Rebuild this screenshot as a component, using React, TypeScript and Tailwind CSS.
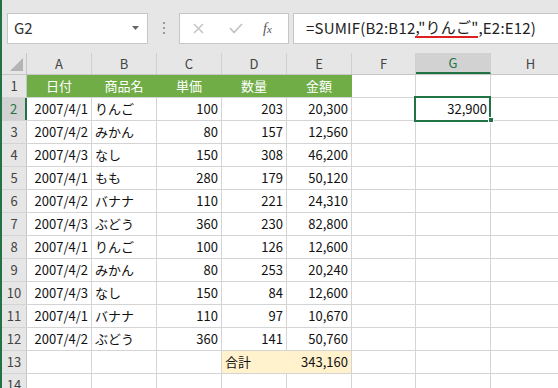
import React from 'react';

const cols = [
  { key: 'A', w: 'w-[65px]' },
  { key: 'B', w: 'w-[65px]' },
  { key: 'C', w: 'w-[65px]' },
  { key: 'D', w: 'w-[65px]' },
  { key: 'E', w: 'w-[65px]' },
  { key: 'F', w: 'w-[64px]' },
  { key: 'G', w: 'w-[75px]' },
  { key: 'H', w: 'w-[80px]' },
];

type Row = [string, string, string, string, string];

const rows: Row[] = [
  ['2007/4/1', 'りんご', '100', '203', '20,300'],
  ['2007/4/2', 'みかん', '80', '157', '12,560'],
  ['2007/4/3', 'なし', '150', '308', '46,200'],
  ['2007/4/1', 'もも', '280', '179', '50,120'],
  ['2007/4/2', 'バナナ', '110', '221', '24,310'],
  ['2007/4/3', 'ぶどう', '360', '230', '82,800'],
  ['2007/4/1', 'りんご', '100', '126', '12,600'],
  ['2007/4/2', 'みかん', '80', '253', '20,240'],
  ['2007/4/3', 'なし', '150', '84', '12,600'],
  ['2007/4/1', 'バナナ', '110', '97', '10,670'],
  ['2007/4/2', 'ぶどう', '360', '141', '50,760'],
];

const heads = ['日付', '商品名', '単価', '数量', '金額'];

const font = { fontFamily: '"Noto Sans CJK JP", "Noto Sans", sans-serif' };

function RowHead({ n, active }: { n: number; active?: boolean }) {
  return (
    <div
      className={`w-[25px] shrink-0 h-full flex items-center justify-center text-[13px] border-r border-[#c6c6c6] ${
        active ? 'bg-[#d2d2d2] text-[#217346] border-r-2 border-r-[#217346]' : 'bg-[#e6e6e6] text-[#444]'
      }`}
    >
      {n}
    </div>
  );
}

function Cell({ i, children, right, cls = '' }: { i: number; children?: React.ReactNode; right?: boolean; cls?: string }) {
  return (
    <div
      className={`${cols[i].w} shrink-0 h-full border-r border-[#d4d4d4] flex items-center px-[3px] text-[13px] text-[#111] whitespace-nowrap ${
        right ? 'justify-end' : 'justify-start'
      } ${cls}`}
    >
      {children}
    </div>
  );
}

export default function App() {
  return (
    <div className="w-[558px] h-[388px] overflow-hidden bg-[#e6e6e6] border-l-2 border-[#217346]" style={font}>
      {/* formula bar */}
      <div className="flex items-center h-[53px] pt-[3px] pl-[5px]">
        <div className="w-[141px] h-[31px] bg-white border border-[#c6c6c6] flex items-center justify-between px-[6px] pr-[8px]">
          <span className="text-[15px] text-[#333]">G2</span>
          <svg width="7" height="5" viewBox="0 0 7 5">
            <path d="M0 0 L7 0 L3.5 4 Z" fill="#666" />
          </svg>
        </div>
        <div className="w-[31px] flex flex-col items-center gap-[3px]">
          <span className="w-[2px] h-[2px] bg-[#9a9a9a]" />
          <span className="w-[2px] h-[2px] bg-[#9a9a9a]" />
          <span className="w-[2px] h-[2px] bg-[#9a9a9a]" />
        </div>
        <div className="w-[110px] h-[31px] bg-white border border-[#c6c6c6] flex items-center">
          <svg className="ml-[13px]" width="11" height="11" viewBox="0 0 11 11">
            <path d="M1 1 L10 10 M10 1 L1 10" stroke="#c4c4c4" strokeWidth="1.5" />
          </svg>
          <svg className="ml-[25px]" width="14" height="11" viewBox="0 0 14 11">
            <path d="M1 5 L5 9.5 L13 1" stroke="#c4c4c4" strokeWidth="1.8" fill="none" />
          </svg>
          <span
            className="ml-[20px] text-[14px] italic text-[#555]"
            style={{ fontFamily: '"Liberation Serif", serif' }}
          >
            f<span className="text-[11px]">x</span>
          </span>
        </div>
        <div className="ml-[4px] flex-1 h-[31px] bg-white border border-[#c6c6c6] border-r-0 flex items-center pl-[12px] text-[15px] tracking-[0.2px] text-[#222] whitespace-nowrap">
          <span>=SUMIF(B2:B12</span>
          <span className="border-b-2 border-[#e02020] leading-[18px]">,"りんご"</span>
          <span>,E2:E12)</span>
        </div>
      </div>

      {/* sheet */}
      <div className="flex flex-col">
        <div className="flex h-[22px] border-b border-[#c6c6c6]">
          <div className="w-[25px] shrink-0 h-full border-r border-[#c6c6c6] relative">
            <svg className="absolute right-[3px] bottom-[3px]" width="13" height="13" viewBox="0 0 13 13">
              <path d="M13 0 L13 13 L0 13 Z" fill="#b4b4b4" />
            </svg>
          </div>
          {cols.map((c) => (
            <div
              key={c.key}
              className={`${c.w} shrink-0 h-full flex items-center justify-center text-[13px] border-r border-[#d0d0d0] ${
                c.key === 'G' ? 'bg-[#d2d2d2] text-[#217346] border-b-2 border-b-[#217346]' : 'text-[#444]'
              }`}
            >
              {c.key}
            </div>
          ))}
        </div>

        {/* row 1 */}
        <div className="flex h-[23px] border-b border-[#d4d4d4] bg-white">
          <RowHead n={1} />
          {heads.map((h, i) => (
            <Cell key={h} i={i} cls="bg-[#70ad47] text-white justify-center border-r-[#70ad47]">
              <span className="w-full text-center text-white">{h}</span>
            </Cell>
          ))}
          <Cell i={5} />
          <Cell i={6} />
          <Cell i={7} />
        </div>

        {rows.map((r, idx) => (
          <div key={idx} className="flex h-[23px] border-b border-[#d4d4d4] bg-white">
            <RowHead n={idx + 2} active={idx === 0} />
            <Cell i={0} right>{r[0]}</Cell>
            <Cell i={1}>{r[1]}</Cell>
            <Cell i={2} right>{r[2]}</Cell>
            <Cell i={3} right>{r[3]}</Cell>
            <Cell i={4} right>{r[4]}</Cell>
            <Cell i={5} />
            {idx === 0 ? (
              <div className="w-[75px] shrink-0 h-full relative">
                <div className="absolute left-[-2px] top-[-2px] w-[77px] h-[26px] border-2 border-[#217346] flex items-center justify-end pr-[2px] text-[13px] text-[#111]">
                  32,900
                </div>
                <div className="absolute right-[-3px] bottom-[-3px] w-[6px] h-[6px] bg-[#217346] border border-white" />
              </div>
            ) : (
              <Cell i={6} />
            )}
            <Cell i={7} />
          </div>
        ))}

        {/* row 13 */}
        <div className="flex h-[23px] border-b border-[#d4d4d4] bg-white">
          <RowHead n={13} />
          <Cell i={0} />
          <Cell i={1} />
          <Cell i={2} />
          <Cell i={3} cls="bg-[#fff2cc] border-r-[#fff2cc]">合計</Cell>
          <Cell i={4} right cls="bg-[#fff2cc]">343,160</Cell>
          <Cell i={5} />
          <Cell i={6} />
          <Cell i={7} />
        </div>

        {/* row 14 */}
        <div className="flex h-[23px] border-b border-[#d4d4d4] bg-white">
          <RowHead n={14} />
          {cols.map((c, i) => (
            <Cell key={c.key} i={i} />
          ))}
        </div>
      </div>
    </div>
  );
}
